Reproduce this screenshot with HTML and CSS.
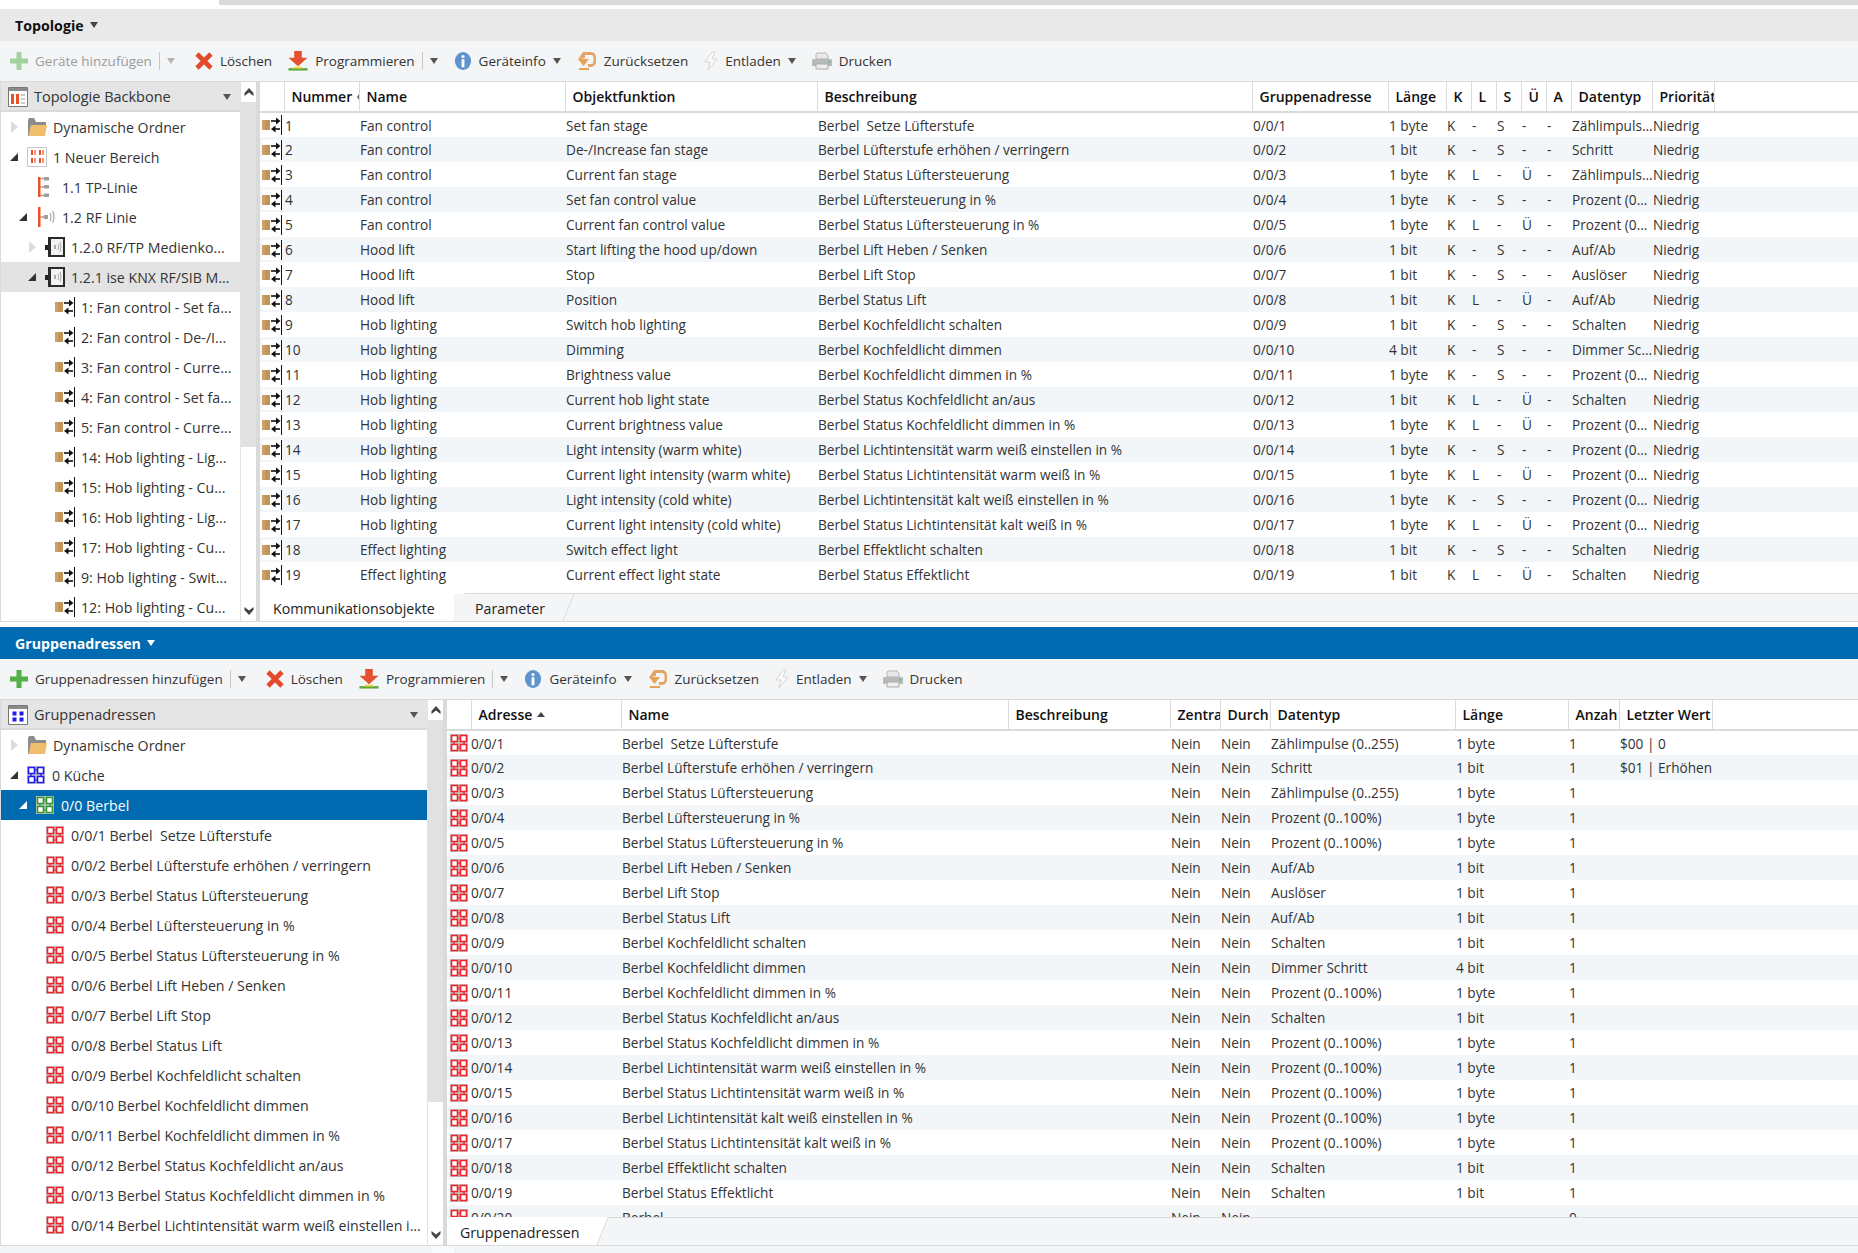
FILE: index.html
```html
<!DOCTYPE html>
<html lang="de">
<head>
    <meta charset="UTF-8">
    <title>Topologie und Gruppenadressen</title>
    <link rel="stylesheet" href="styles.css">
</head>
<body>

<svg class="sprite" xmlns="http://www.w3.org/2000/svg">
    <symbol id="i-plus" viewBox="0 0 18 18"><path d="M6.5 0h5v6.500H18v5h-6.500V18h-5v-6.500H0v-5h6.500z" fill="#55b04a"/></symbol>
    <symbol id="i-x" viewBox="0 0 18 18"><path d="M2 2l14 14M16 2L2 16" stroke="#e5492c" stroke-width="4.600" fill="none"/></symbol>
    <symbol id="i-prog" viewBox="0 0 20 21"><path d="M6 0h8v7h6l-10 9L0 7h6z" fill="#e5512e"/><path d="M0 18h20v2.500H0z" fill="#5aa83c"/><path d="M6 16.500h8l1 2H5z" fill="#f3d43c"/></symbol>
    <symbol id="i-info" viewBox="0 0 18 20"><ellipse cx="9" cy="10" rx="9" ry="10" fill="#5e93cc"/><circle cx="9" cy="5" r="1.800" fill="#fff"/><path d="M7.400 8h3.200v9H7.400z" fill="#fff"/></symbol>
    <symbol id="i-reset" viewBox="0 0 20 20"><path d="M8 1h6a5 5 0 0 1 5 5v5a5 5 0 0 1-5 5h-3v-3h3a2.500 2.500 0 0 0 2.500-2.500V6.500A2.500 2.500 0 0 0 14 4H8v3L1 8.500 6 1z" fill="#e3a565"/><path d="M1 8h11l-5.500 7zM2 17h10v2H2z" fill="#e8a356"/></symbol>
    <symbol id="i-bolt" viewBox="0 0 14 20"><path d="M8 1L1 11h5l-2 8 9-11H8l3-7z" fill="#fafafa" stroke="#d4d6d6"/></symbol>
    <symbol id="i-print" viewBox="0 0 20 20"><path d="M5 2h9l2 3v3H4V3z" fill="#e8e8e8" stroke="#b5b5b5"/><path d="M1 8h18a1 1 0 0 1 1 1v6H0V9a1 1 0 0 1 1-1z" fill="#b8bab9"/><path d="M4 13h12v5H4z" fill="#eee" stroke="#aaa"/><path d="M16 10h2v1.500h-2z" fill="#5bc060"/></symbol>
    <symbol id="i-folder" viewBox="0 0 20 20"><path d="M1 3V19H3L4 8H19V5H9L7 1H2z" fill="#8c8c8c"/><path d="M4 8H20L18 19H1.500z" fill="#efbd6c"/></symbol>
    <symbol id="i-area" viewBox="0 0 20 20"><path d="M.5.500h19v19H.500z" fill="#fff" stroke="#c8c8c8"/><path d="M4 3h2v5H4zM4 11h2v5H4zM12 3h2v5h-2zM12 11h2v5h-2z" fill="#e9502a"/><path d="M7 3h2v5H7zM7 11h2v5H7zM15 3h2v5h-2zM15 11h2v5h-2z" fill="#ef9a80"/></symbol>
    <symbol id="i-tp" viewBox="0 0 20 20"><path d="M2 0h2.500v20H2z" fill="#ea5128"/><path d="M4 1.500h9M4 10h9M4 18.500h9" stroke="#e08a6c" stroke-width="1.500"/><path d="M8 0h5v3.500H8zM8 8h5v3.500H8zM8 16.500h5V20H8z" fill="#9e9e9e"/></symbol>
    <symbol id="i-rf" viewBox="0 0 20 20"><path d="M2 0h2.500v20H2z" fill="#ea5128"/><path d="M4 10h5" stroke="#e08a6c" stroke-width="1.500"/><path d="M8 8h4v4H8z" fill="#9e9e9e"/><path d="M14 6q2 4 0 8M16.500 4q3 6 0 12" stroke="#a8a8a8" stroke-width="1.200" fill="none"/></symbol>
    <symbol id="i-dev" viewBox="0 0 20 20"><path d="M0 8h3v5H0z" fill="#222"/><path d="M3 0h17v20H3z" fill="#2a2a2a"/><path d="M6 2h12v16H6z" fill="#f2f2f2"/><path d="M9 8h2v4H9z" fill="#aaa"/><path d="M13 7q1.500 3 0 6M15 5q2 5 0 10" stroke="#aaa" fill="none"/></symbol>
    <symbol id="i-co" viewBox="0 0 20 20"><path d="M0 0h20v20H0z" fill="#fff"/><path d="M0 5h8v10H0z" fill="#c1945a"/><path d="M0 5h3v10H0z" fill="#cca16b"/><path d="M9 6h7" stroke="#111" stroke-width="1.600"/><path d="M14 2.500l4.500 3.500-4.500 3.500z" fill="#111"/><path d="M11 14h7" stroke="#111" stroke-width="1.600"/><path d="M13.500 10.500L9 14l4.500 3.500z" fill="#111"/><path d="M19 0h1.300v20H19z" fill="#111"/></symbol>
    <symbol id="i-ga" viewBox="0 0 18 18"><path d="M0 0h18v18H0z" fill="#c3c3c3"/><path d="M6 4h6M6 14h6M4 6v6M14 6v6" stroke="currentColor" stroke-width="1.200"/><path d="M1.500 1.500h6v6h-6zM10.500 1.500h6v6h-6zM1.500 10.500h6v6h-6zM10.500 10.500h6v6h-6z" fill="#fff" stroke="currentColor" stroke-width="1.600"/></symbol>
    <symbol id="i-topo" viewBox="0 0 20 20"><path d="M.5.500h19v19H.500z" fill="#fff" stroke="#767676"/><path d="M1 1h18v3H1z" fill="#8a8a8a"/><path d="M3 7h3v10H3zM8 7h3v10H8z" fill="#e9502a"/><path d="M13 7h4v2h-4zM13 11h4v2h-4zM13 15h4v2h-4z" fill="#c9c9c9"/></symbol>
    <symbol id="i-gahead" viewBox="0 0 20 20"><path d="M.5.500h19v19H.500z" fill="#fff" stroke="#767676"/><path d="M1 1h18v3H1z" fill="#8a8a8a"/><path d="M4.500 6.500h4v4h-4zM11.500 6.500h4v4h-4zM4.500 12.500h4v4h-4zM11.500 12.500h4v4h-4z" fill="#1c1cf0"/></symbol>
    <symbol id="i-up" viewBox="0 0 10 8"><path d="M5 0l4.500 5v3L5 4.500.5 8V5z" fill="#444"/></symbol>
    <symbol id="i-down" viewBox="0 0 10 8"><path d="M5 8L.5 3V0L5 3.500 9.500 0v3z" fill="#444"/></symbol>
</svg>

<div class="top-strip"><div class="top-strip-bar"></div></div>

<!-- Topologie -->
<section class="pane pane-topo">
    <div class="title-bar"><span>Topologie</span><i class="caret"></i></div>
    <div class="toolbar">
        <div class="tool tool-off"><svg class="ic-18"><use href="#i-plus"/></svg><span>Geräte hinzufügen</span><b class="sep"></b><i class="caret caret-off"></i></div>
        <div class="tool"><svg class="ic-18"><use href="#i-x"/></svg><span>Löschen</span></div>
        <div class="tool"><svg class="ic-20"><use href="#i-prog"/></svg><span>Programmieren</span><b class="sep"></b><i class="caret"></i></div>
        <div class="tool"><svg class="ic-18"><use href="#i-info"/></svg><span>Geräteinfo</span><i class="caret"></i></div>
        <div class="tool"><svg class="ic-20"><use href="#i-reset"/></svg><span>Zurücksetzen</span></div>
        <div class="tool"><svg class="ic-14"><use href="#i-bolt"/></svg><span>Entladen</span><i class="caret"></i></div>
        <div class="tool"><svg class="ic-20"><use href="#i-print"/></svg><span>Drucken</span></div>
    </div>
    <div class="pane-body">
        <div class="tree tree-topo">
            <div class="tree-head"><svg class="ic-20"><use href="#i-topo"/></svg><span>Topologie Backbone</span><i class="caret"></i></div>
            <div class="tree-row lv0"><i class="tw tw-closed"></i><svg class="ic-20"><use href="#i-folder"/></svg><span>Dynamische Ordner</span></div>
            <div class="tree-row lv0"><i class="tw tw-open"></i><svg class="ic-20"><use href="#i-area"/></svg><span>1 Neuer Bereich</span></div>
            <div class="tree-row lv1"><i class="tw"></i><svg class="ic-20"><use href="#i-tp"/></svg><span>1.1 TP-Linie</span></div>
            <div class="tree-row lv1"><i class="tw tw-open"></i><svg class="ic-20"><use href="#i-rf"/></svg><span>1.2 RF Linie</span></div>
            <div class="tree-row lv2"><i class="tw tw-closed"></i><svg class="ic-20"><use href="#i-dev"/></svg><span>1.2.0 RF/TP Medienko...</span></div>
            <div class="tree-row lv2 tree-row-sel"><i class="tw tw-open"></i><svg class="ic-20"><use href="#i-dev"/></svg><span>1.2.1 ise KNX RF/SIB M...</span></div>
            <div class="tree-row lv3"><i class="tw"></i><svg class="ic-20"><use href="#i-co"/></svg><span>1: Fan control - Set fa...</span></div>
            <div class="tree-row lv3"><i class="tw"></i><svg class="ic-20"><use href="#i-co"/></svg><span>2: Fan control - De-/I...</span></div>
            <div class="tree-row lv3"><i class="tw"></i><svg class="ic-20"><use href="#i-co"/></svg><span>3: Fan control - Curre...</span></div>
            <div class="tree-row lv3"><i class="tw"></i><svg class="ic-20"><use href="#i-co"/></svg><span>4: Fan control - Set fa...</span></div>
            <div class="tree-row lv3"><i class="tw"></i><svg class="ic-20"><use href="#i-co"/></svg><span>5: Fan control - Curre...</span></div>
            <div class="tree-row lv3"><i class="tw"></i><svg class="ic-20"><use href="#i-co"/></svg><span>14: Hob lighting - Lig...</span></div>
            <div class="tree-row lv3"><i class="tw"></i><svg class="ic-20"><use href="#i-co"/></svg><span>15: Hob lighting - Cu...</span></div>
            <div class="tree-row lv3"><i class="tw"></i><svg class="ic-20"><use href="#i-co"/></svg><span>16: Hob lighting - Lig...</span></div>
            <div class="tree-row lv3"><i class="tw"></i><svg class="ic-20"><use href="#i-co"/></svg><span>17: Hob lighting - Cu...</span></div>
            <div class="tree-row lv3"><i class="tw"></i><svg class="ic-20"><use href="#i-co"/></svg><span>9: Hob lighting - Swit...</span></div>
            <div class="tree-row lv3"><i class="tw"></i><svg class="ic-20"><use href="#i-co"/></svg><span>12: Hob lighting - Cu...</span></div>
        </div>
        <div class="scroller">
            <div class="scroll-btn"><svg class="ic-chev"><use href="#i-up"/></svg></div>
            <div class="scroll-thumb scroll-thumb-topo"></div>
            <div class="scroll-btn scroll-btn-end"><svg class="ic-chev"><use href="#i-down"/></svg></div>
        </div>
        <div class="data">
            <div class="data-scroll">
                <table class="grid grid-topo">
                    <colgroup>
                        <col class="c24"><col class="c75"><col class="c206"><col class="c252"><col class="c435"><col class="c136"><col class="c58"><col class="c25"><col class="c25"><col class="c25"><col class="c25"><col class="c25"><col class="c81"><col class="c62"><col>
                    </colgroup>
                    <thead>
                        <tr><th></th><th class="sorted">Nummer</th><th>Name</th><th>Objektfunktion</th><th>Beschreibung</th><th>Gruppenadresse</th><th>Länge</th><th>K</th><th>L</th><th>S</th><th>Ü</th><th>A</th><th>Datentyp</th><th>Priorität</th><th class="filler"></th></tr>
                    </thead>
                    <tbody>
                        <tr><td class="td-ic"><svg class="ic-20"><use href="#i-co"/></svg></td><td>1</td><td>Fan control</td><td>Set fan stage</td><td>Berbel  Setze Lüfterstufe</td><td>0/0/1</td><td>1 byte</td><td>K</td><td>-</td><td>S</td><td>-</td><td>-</td><td>Zählimpuls...</td><td>Niedrig</td><td></td></tr>
                        <tr><td class="td-ic"><svg class="ic-20"><use href="#i-co"/></svg></td><td>2</td><td>Fan control</td><td>De-/Increase fan stage</td><td>Berbel Lüfterstufe erhöhen / verringern</td><td>0/0/2</td><td>1 bit</td><td>K</td><td>-</td><td>S</td><td>-</td><td>-</td><td>Schritt</td><td>Niedrig</td><td></td></tr>
                        <tr><td class="td-ic"><svg class="ic-20"><use href="#i-co"/></svg></td><td>3</td><td>Fan control</td><td>Current fan stage</td><td>Berbel Status Lüftersteuerung</td><td>0/0/3</td><td>1 byte</td><td>K</td><td>L</td><td>-</td><td>Ü</td><td>-</td><td>Zählimpuls...</td><td>Niedrig</td><td></td></tr>
                        <tr><td class="td-ic"><svg class="ic-20"><use href="#i-co"/></svg></td><td>4</td><td>Fan control</td><td>Set fan control value</td><td>Berbel Lüftersteuerung in %</td><td>0/0/4</td><td>1 byte</td><td>K</td><td>-</td><td>S</td><td>-</td><td>-</td><td>Prozent (0...</td><td>Niedrig</td><td></td></tr>
                        <tr><td class="td-ic"><svg class="ic-20"><use href="#i-co"/></svg></td><td>5</td><td>Fan control</td><td>Current fan control value</td><td>Berbel Status Lüftersteuerung in %</td><td>0/0/5</td><td>1 byte</td><td>K</td><td>L</td><td>-</td><td>Ü</td><td>-</td><td>Prozent (0...</td><td>Niedrig</td><td></td></tr>
                        <tr><td class="td-ic"><svg class="ic-20"><use href="#i-co"/></svg></td><td>6</td><td>Hood lift</td><td>Start lifting the hood up/down</td><td>Berbel Lift Heben / Senken</td><td>0/0/6</td><td>1 bit</td><td>K</td><td>-</td><td>S</td><td>-</td><td>-</td><td>Auf/Ab</td><td>Niedrig</td><td></td></tr>
                        <tr><td class="td-ic"><svg class="ic-20"><use href="#i-co"/></svg></td><td>7</td><td>Hood lift</td><td>Stop</td><td>Berbel Lift Stop</td><td>0/0/7</td><td>1 bit</td><td>K</td><td>-</td><td>S</td><td>-</td><td>-</td><td>Auslöser</td><td>Niedrig</td><td></td></tr>
                        <tr><td class="td-ic"><svg class="ic-20"><use href="#i-co"/></svg></td><td>8</td><td>Hood lift</td><td>Position</td><td>Berbel Status Lift</td><td>0/0/8</td><td>1 bit</td><td>K</td><td>L</td><td>-</td><td>Ü</td><td>-</td><td>Auf/Ab</td><td>Niedrig</td><td></td></tr>
                        <tr><td class="td-ic"><svg class="ic-20"><use href="#i-co"/></svg></td><td>9</td><td>Hob lighting</td><td>Switch hob lighting</td><td>Berbel Kochfeldlicht schalten</td><td>0/0/9</td><td>1 bit</td><td>K</td><td>-</td><td>S</td><td>-</td><td>-</td><td>Schalten</td><td>Niedrig</td><td></td></tr>
                        <tr><td class="td-ic"><svg class="ic-20"><use href="#i-co"/></svg></td><td>10</td><td>Hob lighting</td><td>Dimming</td><td>Berbel Kochfeldlicht dimmen</td><td>0/0/10</td><td>4 bit</td><td>K</td><td>-</td><td>S</td><td>-</td><td>-</td><td>Dimmer Sc...</td><td>Niedrig</td><td></td></tr>
                        <tr><td class="td-ic"><svg class="ic-20"><use href="#i-co"/></svg></td><td>11</td><td>Hob lighting</td><td>Brightness value</td><td>Berbel Kochfeldlicht dimmen in %</td><td>0/0/11</td><td>1 byte</td><td>K</td><td>-</td><td>S</td><td>-</td><td>-</td><td>Prozent (0...</td><td>Niedrig</td><td></td></tr>
                        <tr><td class="td-ic"><svg class="ic-20"><use href="#i-co"/></svg></td><td>12</td><td>Hob lighting</td><td>Current hob light state</td><td>Berbel Status Kochfeldlicht an/aus</td><td>0/0/12</td><td>1 bit</td><td>K</td><td>L</td><td>-</td><td>Ü</td><td>-</td><td>Schalten</td><td>Niedrig</td><td></td></tr>
                        <tr><td class="td-ic"><svg class="ic-20"><use href="#i-co"/></svg></td><td>13</td><td>Hob lighting</td><td>Current brightness value</td><td>Berbel Status Kochfeldlicht dimmen in %</td><td>0/0/13</td><td>1 byte</td><td>K</td><td>L</td><td>-</td><td>Ü</td><td>-</td><td>Prozent (0...</td><td>Niedrig</td><td></td></tr>
                        <tr><td class="td-ic"><svg class="ic-20"><use href="#i-co"/></svg></td><td>14</td><td>Hob lighting</td><td>Light intensity (warm white)</td><td>Berbel Lichtintensität warm weiß einstellen in %</td><td>0/0/14</td><td>1 byte</td><td>K</td><td>-</td><td>S</td><td>-</td><td>-</td><td>Prozent (0...</td><td>Niedrig</td><td></td></tr>
                        <tr><td class="td-ic"><svg class="ic-20"><use href="#i-co"/></svg></td><td>15</td><td>Hob lighting</td><td>Current light intensity (warm white)</td><td>Berbel Status Lichtintensität warm weiß in %</td><td>0/0/15</td><td>1 byte</td><td>K</td><td>L</td><td>-</td><td>Ü</td><td>-</td><td>Prozent (0...</td><td>Niedrig</td><td></td></tr>
                        <tr><td class="td-ic"><svg class="ic-20"><use href="#i-co"/></svg></td><td>16</td><td>Hob lighting</td><td>Light intensity (cold white)</td><td>Berbel Lichtintensität kalt weiß einstellen in %</td><td>0/0/16</td><td>1 byte</td><td>K</td><td>-</td><td>S</td><td>-</td><td>-</td><td>Prozent (0...</td><td>Niedrig</td><td></td></tr>
                        <tr><td class="td-ic"><svg class="ic-20"><use href="#i-co"/></svg></td><td>17</td><td>Hob lighting</td><td>Current light intensity (cold white)</td><td>Berbel Status Lichtintensität kalt weiß in %</td><td>0/0/17</td><td>1 byte</td><td>K</td><td>L</td><td>-</td><td>Ü</td><td>-</td><td>Prozent (0...</td><td>Niedrig</td><td></td></tr>
                        <tr><td class="td-ic"><svg class="ic-20"><use href="#i-co"/></svg></td><td>18</td><td>Effect lighting</td><td>Switch effect light</td><td>Berbel Effektlicht schalten</td><td>0/0/18</td><td>1 bit</td><td>K</td><td>-</td><td>S</td><td>-</td><td>-</td><td>Schalten</td><td>Niedrig</td><td></td></tr>
                        <tr><td class="td-ic"><svg class="ic-20"><use href="#i-co"/></svg></td><td>19</td><td>Effect lighting</td><td>Current effect light state</td><td>Berbel Status Effektlicht</td><td>0/0/19</td><td>1 bit</td><td>K</td><td>L</td><td>-</td><td>Ü</td><td>-</td><td>Schalten</td><td>Niedrig</td><td></td></tr>
                    </tbody>
                </table>
            </div>
            <div class="tabs">
                <div class="tab tab-on tab-kommu">Kommunikationsobjekte</div>
                <div class="tab tab-param">Parameter</div>
            </div>
        </div>
    </div>
</section>

<!-- Gruppenadressen -->
<section class="pane pane-ga">
    <div class="title-bar title-bar-on"><span>Gruppenadressen</span><i class="caret"></i></div>
    <div class="toolbar">
        <div class="tool"><svg class="ic-18"><use href="#i-plus"/></svg><span>Gruppenadressen hinzufügen</span><b class="sep"></b><i class="caret"></i></div>
        <div class="tool"><svg class="ic-18"><use href="#i-x"/></svg><span>Löschen</span></div>
        <div class="tool"><svg class="ic-20"><use href="#i-prog"/></svg><span>Programmieren</span><b class="sep"></b><i class="caret"></i></div>
        <div class="tool"><svg class="ic-18"><use href="#i-info"/></svg><span>Geräteinfo</span><i class="caret"></i></div>
        <div class="tool"><svg class="ic-20"><use href="#i-reset"/></svg><span>Zurücksetzen</span></div>
        <div class="tool"><svg class="ic-14"><use href="#i-bolt"/></svg><span>Entladen</span><i class="caret"></i></div>
        <div class="tool"><svg class="ic-20"><use href="#i-print"/></svg><span>Drucken</span></div>
    </div>
    <div class="pane-body">
        <div class="tree tree-ga">
            <div class="tree-head"><svg class="ic-20"><use href="#i-gahead"/></svg><span>Gruppenadressen</span><i class="caret"></i></div>
            <div class="tree-row lv0"><i class="tw tw-closed"></i><svg class="ic-20"><use href="#i-folder"/></svg><span>Dynamische Ordner</span></div>
            <div class="tree-row lv0"><i class="tw tw-open"></i><svg class="ic-ga ga-blue"><use href="#i-ga"/></svg><span>0 Küche</span></div>
            <div class="tree-row lv1 tree-row-on"><i class="tw tw-open"></i><svg class="ic-ga ga-green"><use href="#i-ga"/></svg><span>0/0 Berbel</span></div>
            <div class="tree-row lv2b"><i class="tw"></i><svg class="ic-ga"><use href="#i-ga"/></svg><span>0/0/1 Berbel  Setze Lüfterstufe</span></div>
            <div class="tree-row lv2b"><i class="tw"></i><svg class="ic-ga"><use href="#i-ga"/></svg><span>0/0/2 Berbel Lüfterstufe erhöhen / verringern</span></div>
            <div class="tree-row lv2b"><i class="tw"></i><svg class="ic-ga"><use href="#i-ga"/></svg><span>0/0/3 Berbel Status Lüftersteuerung</span></div>
            <div class="tree-row lv2b"><i class="tw"></i><svg class="ic-ga"><use href="#i-ga"/></svg><span>0/0/4 Berbel Lüftersteuerung in %</span></div>
            <div class="tree-row lv2b"><i class="tw"></i><svg class="ic-ga"><use href="#i-ga"/></svg><span>0/0/5 Berbel Status Lüftersteuerung in %</span></div>
            <div class="tree-row lv2b"><i class="tw"></i><svg class="ic-ga"><use href="#i-ga"/></svg><span>0/0/6 Berbel Lift Heben / Senken</span></div>
            <div class="tree-row lv2b"><i class="tw"></i><svg class="ic-ga"><use href="#i-ga"/></svg><span>0/0/7 Berbel Lift Stop</span></div>
            <div class="tree-row lv2b"><i class="tw"></i><svg class="ic-ga"><use href="#i-ga"/></svg><span>0/0/8 Berbel Status Lift</span></div>
            <div class="tree-row lv2b"><i class="tw"></i><svg class="ic-ga"><use href="#i-ga"/></svg><span>0/0/9 Berbel Kochfeldlicht schalten</span></div>
            <div class="tree-row lv2b"><i class="tw"></i><svg class="ic-ga"><use href="#i-ga"/></svg><span>0/0/10 Berbel Kochfeldlicht dimmen</span></div>
            <div class="tree-row lv2b"><i class="tw"></i><svg class="ic-ga"><use href="#i-ga"/></svg><span>0/0/11 Berbel Kochfeldlicht dimmen in %</span></div>
            <div class="tree-row lv2b"><i class="tw"></i><svg class="ic-ga"><use href="#i-ga"/></svg><span>0/0/12 Berbel Status Kochfeldlicht an/aus</span></div>
            <div class="tree-row lv2b"><i class="tw"></i><svg class="ic-ga"><use href="#i-ga"/></svg><span>0/0/13 Berbel Status Kochfeldlicht dimmen in %</span></div>
            <div class="tree-row lv2b"><i class="tw"></i><svg class="ic-ga"><use href="#i-ga"/></svg><span>0/0/14 Berbel Lichtintensität warm weiß einstellen i...</span></div>
        </div>
        <div class="scroller">
            <div class="scroll-btn"><svg class="ic-chev"><use href="#i-up"/></svg></div>
            <div class="scroll-thumb scroll-thumb-ga"></div>
            <div class="scroll-btn scroll-btn-end"><svg class="ic-chev"><use href="#i-down"/></svg></div>
        </div>
        <div class="data">
            <div class="data-scroll">
                <table class="grid grid-ga">
                    <colgroup>
                        <col class="c24"><col class="c150"><col class="c387"><col class="c162"><col class="c50"><col class="c50"><col class="c185"><col class="c113"><col class="c51"><col class="c93"><col>
                    </colgroup>
                    <thead>
                        <tr><th></th><th>Adresse<i class="sort-up"></i></th><th>Name</th><th>Beschreibung</th><th>Zentra</th><th>Durch</th><th>Datentyp</th><th>Länge</th><th>Anzah</th><th>Letzter Wert</th><th class="filler"></th></tr>
                    </thead>
                    <tbody>
                        <tr><td class="td-ic"><svg class="ic-ga"><use href="#i-ga"/></svg></td><td class="td-addr">0/0/1</td><td>Berbel  Setze Lüfterstufe</td><td></td><td>Nein</td><td>Nein</td><td>Zählimpulse (0..255)</td><td>1 byte</td><td>1</td><td>$00 | 0</td><td></td></tr>
                        <tr><td class="td-ic"><svg class="ic-ga"><use href="#i-ga"/></svg></td><td class="td-addr">0/0/2</td><td>Berbel Lüfterstufe erhöhen / verringern</td><td></td><td>Nein</td><td>Nein</td><td>Schritt</td><td>1 bit</td><td>1</td><td>$01 | Erhöhen</td><td></td></tr>
                        <tr><td class="td-ic"><svg class="ic-ga"><use href="#i-ga"/></svg></td><td class="td-addr">0/0/3</td><td>Berbel Status Lüftersteuerung</td><td></td><td>Nein</td><td>Nein</td><td>Zählimpulse (0..255)</td><td>1 byte</td><td>1</td><td></td><td></td></tr>
                        <tr><td class="td-ic"><svg class="ic-ga"><use href="#i-ga"/></svg></td><td class="td-addr">0/0/4</td><td>Berbel Lüftersteuerung in %</td><td></td><td>Nein</td><td>Nein</td><td>Prozent (0..100%)</td><td>1 byte</td><td>1</td><td></td><td></td></tr>
                        <tr><td class="td-ic"><svg class="ic-ga"><use href="#i-ga"/></svg></td><td class="td-addr">0/0/5</td><td>Berbel Status Lüftersteuerung in %</td><td></td><td>Nein</td><td>Nein</td><td>Prozent (0..100%)</td><td>1 byte</td><td>1</td><td></td><td></td></tr>
                        <tr><td class="td-ic"><svg class="ic-ga"><use href="#i-ga"/></svg></td><td class="td-addr">0/0/6</td><td>Berbel Lift Heben / Senken</td><td></td><td>Nein</td><td>Nein</td><td>Auf/Ab</td><td>1 bit</td><td>1</td><td></td><td></td></tr>
                        <tr><td class="td-ic"><svg class="ic-ga"><use href="#i-ga"/></svg></td><td class="td-addr">0/0/7</td><td>Berbel Lift Stop</td><td></td><td>Nein</td><td>Nein</td><td>Auslöser</td><td>1 bit</td><td>1</td><td></td><td></td></tr>
                        <tr><td class="td-ic"><svg class="ic-ga"><use href="#i-ga"/></svg></td><td class="td-addr">0/0/8</td><td>Berbel Status Lift</td><td></td><td>Nein</td><td>Nein</td><td>Auf/Ab</td><td>1 bit</td><td>1</td><td></td><td></td></tr>
                        <tr><td class="td-ic"><svg class="ic-ga"><use href="#i-ga"/></svg></td><td class="td-addr">0/0/9</td><td>Berbel Kochfeldlicht schalten</td><td></td><td>Nein</td><td>Nein</td><td>Schalten</td><td>1 bit</td><td>1</td><td></td><td></td></tr>
                        <tr><td class="td-ic"><svg class="ic-ga"><use href="#i-ga"/></svg></td><td class="td-addr">0/0/10</td><td>Berbel Kochfeldlicht dimmen</td><td></td><td>Nein</td><td>Nein</td><td>Dimmer Schritt</td><td>4 bit</td><td>1</td><td></td><td></td></tr>
                        <tr><td class="td-ic"><svg class="ic-ga"><use href="#i-ga"/></svg></td><td class="td-addr">0/0/11</td><td>Berbel Kochfeldlicht dimmen in %</td><td></td><td>Nein</td><td>Nein</td><td>Prozent (0..100%)</td><td>1 byte</td><td>1</td><td></td><td></td></tr>
                        <tr><td class="td-ic"><svg class="ic-ga"><use href="#i-ga"/></svg></td><td class="td-addr">0/0/12</td><td>Berbel Status Kochfeldlicht an/aus</td><td></td><td>Nein</td><td>Nein</td><td>Schalten</td><td>1 bit</td><td>1</td><td></td><td></td></tr>
                        <tr><td class="td-ic"><svg class="ic-ga"><use href="#i-ga"/></svg></td><td class="td-addr">0/0/13</td><td>Berbel Status Kochfeldlicht dimmen in %</td><td></td><td>Nein</td><td>Nein</td><td>Prozent (0..100%)</td><td>1 byte</td><td>1</td><td></td><td></td></tr>
                        <tr><td class="td-ic"><svg class="ic-ga"><use href="#i-ga"/></svg></td><td class="td-addr">0/0/14</td><td>Berbel Lichtintensität warm weiß einstellen in %</td><td></td><td>Nein</td><td>Nein</td><td>Prozent (0..100%)</td><td>1 byte</td><td>1</td><td></td><td></td></tr>
                        <tr><td class="td-ic"><svg class="ic-ga"><use href="#i-ga"/></svg></td><td class="td-addr">0/0/15</td><td>Berbel Status Lichtintensität warm weiß in %</td><td></td><td>Nein</td><td>Nein</td><td>Prozent (0..100%)</td><td>1 byte</td><td>1</td><td></td><td></td></tr>
                        <tr><td class="td-ic"><svg class="ic-ga"><use href="#i-ga"/></svg></td><td class="td-addr">0/0/16</td><td>Berbel Lichtintensität kalt weiß einstellen in %</td><td></td><td>Nein</td><td>Nein</td><td>Prozent (0..100%)</td><td>1 byte</td><td>1</td><td></td><td></td></tr>
                        <tr><td class="td-ic"><svg class="ic-ga"><use href="#i-ga"/></svg></td><td class="td-addr">0/0/17</td><td>Berbel Status Lichtintensität kalt weiß in %</td><td></td><td>Nein</td><td>Nein</td><td>Prozent (0..100%)</td><td>1 byte</td><td>1</td><td></td><td></td></tr>
                        <tr><td class="td-ic"><svg class="ic-ga"><use href="#i-ga"/></svg></td><td class="td-addr">0/0/18</td><td>Berbel Effektlicht schalten</td><td></td><td>Nein</td><td>Nein</td><td>Schalten</td><td>1 bit</td><td>1</td><td></td><td></td></tr>
                        <tr><td class="td-ic"><svg class="ic-ga"><use href="#i-ga"/></svg></td><td class="td-addr">0/0/19</td><td>Berbel Status Effektlicht</td><td></td><td>Nein</td><td>Nein</td><td>Schalten</td><td>1 bit</td><td>1</td><td></td><td></td></tr>
                        <tr><td class="td-ic"><svg class="ic-ga"><use href="#i-ga"/></svg></td><td class="td-addr">0/0/20</td><td>Berbel</td><td></td><td>Nein</td><td>Nein</td><td></td><td></td><td>0</td><td></td><td></td></tr>
                    </tbody>
                </table>
            </div>
            <div class="tabs">
                <div class="tab tab-on tab-ga">Gruppenadressen</div>
            </div>
        </div>
    </div>
</section>

<div class="status-strip"><div class="status-grip"></div></div>

</body>
</html>
```

FILE: styles.css
```css
* {
    box-sizing: border-box;
}
html, body {
    margin: 0;
    height: 1253px;
    overflow: hidden;
}
body {
    font-family: "Open Sans", "Noto Sans", sans-serif;
    font-size: 13.65px;
    color: #333;
    background-color: #fff;
    display: flex;
    flex-direction: column;
}
.sprite {
    display: none;
}
svg {
    flex: none;
    display: block;
}
.ic-20 { width: 20px; height: 20px; }
.ic-18 { width: 18px; height: 18px; }
.ic-14 { width: 14px; height: 20px; }
.ic-chev { width: 10px; height: 8px; }
.ic-ga { width: 18px; height: 18px; color: #f0232b; margin-right: 1px; }
.ga-blue { color: #1c1cf0; }
.ga-green { color: #2f9a2f; }

.top-strip {
    height: 9px;
    padding-left: 219px;
}
.top-strip-bar {
    height: 5px;
    background-color: #d9dadc;
}

.pane {
    display: flex;
    flex-direction: column;
}
.pane-topo {
    height: 613px;
    margin-bottom: 5px;
}
.pane-ga {
    height: 619px;
}

.title-bar {
    height: 32px;
    flex: none;
    display: flex;
    align-items: center;
    padding-left: 15px;
    background-color: #e9e9e9;
    color: #111;
    font-size: 14.2px;
    font-weight: 700;
}
.title-bar .caret {
    margin-left: 6px;
    border-top-color: #444;
}
.title-bar-on {
    background-color: #006bb1;
    color: #fff;
}
.title-bar-on .caret {
    border-top-color: #fff;
}

.caret {
    display: block;
    flex: none;
    width: 0;
    height: 0;
    border-left: 4.500px solid transparent;
    border-right: 4.500px solid transparent;
    border-top: 6px solid #555;
}
.caret-off {
    border-top-color: #b5b5b5;
}

.toolbar {
    height: 41px;
    flex: none;
    display: flex;
    align-items: center;
    gap: 16px;
    padding: 0 0 1px 10px;
    background-color: #f3f5f7;
    border-bottom: 1px solid #d9dadc;
    color: #333;
    font-size: 13.5px;
}
.tool {
    display: flex;
    align-items: center;
    gap: 7px;
}
.tool:first-child {
    margin-right: 4px;
}
.tool-off {
    color: #9b9b9b;
}
.tool-off svg {
    opacity: 0.5;
}
.sep {
    display: block;
    width: 1px;
    height: 18px;
    background-color: #c8c8c8;
}

.pane-body {
    flex: 1;
    min-height: 0;
    display: flex;
    border-bottom: 1px solid #d9dadc;
    border-left: 1px solid #d9dadc;
}

.tree {
    flex: none;
    overflow: hidden;
    border-right: 1px solid #e2e2e2;
    font-size: 14.2px;
}
.tree-topo { width: 240px; }
.tree-ga { width: 427px; }
.tree-head {
    height: 30px;
    display: flex;
    align-items: center;
    padding: 1px 9px 0 7px;
    background-color: #e5e5e5;
    border-bottom: 2px solid #d9dadc;
    font-size: 14.5px;
}
.tree-head span {
    flex: 1;
    margin-left: 6px;
}
.tree-row {
    height: 30px;
    display: flex;
    align-items: center;
    white-space: pre;
}
.tree-row span {
    margin-left: 6px;
}
.lv0 { padding-left: 9px; }
.lv1 { padding-left: 18px; }
.lv2 { padding-left: 27px; }
.lv2b { padding-left: 28px; }
.lv3 { padding-left: 37px; }
.tree-row-sel {
    background-color: #e3e3e3;
}
.tree-row-on {
    background-color: #006bb1;
    color: #fff;
}
.tw {
    display: block;
    flex: none;
    width: 17px;
    height: 10px;
    position: relative;
}
.tw-open::before {
    content: "";
    position: absolute;
    left: 0;
    top: 1px;
    border-bottom: 8px solid #333;
    border-left: 8px solid transparent;
}
.tree-row-on .tw-open::before {
    border-bottom-color: #fff;
}
.tw-closed::before {
    content: "";
    position: absolute;
    left: 1px;
    top: -1px;
    border-top: 6px solid transparent;
    border-bottom: 6px solid transparent;
    border-left: 7px solid #dcdcdc;
}

.scroller {
    width: 15px;
    flex: none;
    display: flex;
    flex-direction: column;
    background-color: #fff;
    margin-right: 4px;
    box-shadow: 4px 0 0 #d9dadc;
}
.scroll-btn {
    height: 20px;
    flex: none;
    display: flex;
    justify-content: center;
    align-items: center;
}
.scroll-btn-end {
    margin-top: auto;
}
.scroll-thumb {
    background-color: #e1e1e1;
}
.scroll-thumb-topo { height: 345px; }
.scroll-thumb-ga { height: 382px; }

.data {
    flex: 1;
    min-width: 0;
    display: flex;
    flex-direction: column;
}
.data-scroll {
    flex: 1;
    min-height: 0;
    overflow: hidden;
}

.grid {
    width: 100%;
    table-layout: fixed;
    border-collapse: collapse;
}
.grid th {
    height: 30px;
    padding: 0 0 0 7px;
    text-align: left;
    font-size: 14px;
    font-weight: 600;
    color: #111;
    white-space: nowrap;
    overflow: hidden;
    border-right: 1px solid #dcdcdc;
    border-bottom: 2px solid #d9dadc;
}
.grid th.filler {
    border-right: none;
}
.grid th.sorted {
    position: relative;
}
.grid th.sorted::after {
    content: "";
    position: absolute;
    right: 0;
    top: 12px;
    border-top: 3px solid transparent;
    border-bottom: 3px solid transparent;
    border-right: 2px solid #666;
}
.grid td {
    height: 25px;
    padding: 0 0 0 1px;
    white-space: pre;
    overflow: hidden;
}
.grid tbody tr:nth-child(even) {
    background-color: #f2f6f9;
}
.grid td.td-ic {
    padding-left: 2px;
}
.grid-ga td.td-ic {
    padding-left: 3px;
}
.grid-ga td.td-addr {
    padding-left: 0;
}
.sort-up {
    display: inline-block;
    margin-left: 5px;
    vertical-align: 3px;
    border-left: 4px solid transparent;
    border-right: 4px solid transparent;
    border-bottom: 5px solid #444;
}
.c24 { width: 24px; }
.c25 { width: 25px; }
.c50 { width: 50px; }
.c51 { width: 51px; }
.c58 { width: 58px; }
.c62 { width: 62px; }
.c75 { width: 75px; }
.c81 { width: 81px; }
.c93 { width: 93px; }
.c113 { width: 113px; }
.c136 { width: 136px; }
.c150 { width: 150px; }
.c162 { width: 162px; }
.c185 { width: 185px; }
.c206 { width: 206px; }
.c252 { width: 252px; }
.c387 { width: 387px; }
.c435 { width: 435px; }

.tabs {
    height: 28px;
    flex: none;
    display: flex;
    background-color: #f3f5f7;
    border-top: 1px solid #d9dadc;
    font-size: 14.2px;
}
.tab {
    position: relative;
    display: flex;
    align-items: center;
    padding: 2px 0 0 13px;
    color: #222;
}
.tab-on {
    background-color: #fff;
    margin-top: -1px;
}
.tab::after {
    content: "";
    position: absolute;
    top: 0;
    bottom: 0;
    right: -6px;
    width: 12px;
    transform: skewX(-22deg);
    border-right: 1px solid #d9dadc;
    background-color: inherit;
}
.tab-kommu { width: 194px; }
.tab-param { width: 109px; padding-left: 21px; background-color: #f3f5f7; }
.tab-ga { width: 150px; }

.status-strip {
    flex: 1;
    background-color: #f3f5f7;
    padding-left: 430px;
}
.status-grip {
    width: 26px;
    height: 100%;
    background-color: #f8f9fa;
    border-left: 1px solid #eceeef;
    border-right: 1px solid #eceeef;
}
```
